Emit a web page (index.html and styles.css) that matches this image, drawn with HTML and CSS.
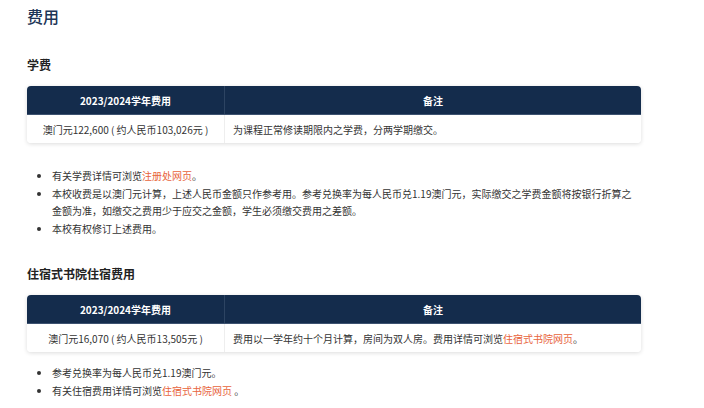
FILE: index.html
```html
<!DOCTYPE html>
<html lang="zh-CN">
<head>
    <meta charset="UTF-8">
    <meta name="viewport" content="width=device-width, initial-scale=1.0">
    <title>费用</title>
    <link rel="stylesheet" href="styles.css">
</head>
<body>
    <div class="page">
        <h1 class="page-title">费用</h1>

        <h3 class="section-title">学费</h3>
        <div class="fee-table">
            <div class="fee-head">
                <div class="cell cell-amount">2023/2024学年费用</div>
                <div class="cell cell-note">备注</div>
            </div>
            <div class="fee-row">
                <div class="cell cell-amount">澳门元122,600 ( 约人民币103,026元 )</div>
                <div class="cell cell-note">为课程正常修读期限内之学费，分两学期缴交。</div>
            </div>
        </div>
        <ul class="notes notes-first">
            <li>有关学费详情可浏览<a href="#">注册处网页</a>。</li>
            <li>本校收费是以澳门元计算，上述人民币金额只作参考用。参考兑换率为每人民币兑1.19澳门元，实际缴交之学费金额将按银行折算之金额为准，如缴交之费用少于应交之金额，学生必须缴交费用之差额。</li>
            <li>本校有权修订上述费用。</li>
        </ul>

        <h3 class="section-title">住宿式书院住宿费用</h3>
        <div class="fee-table">
            <div class="fee-head">
                <div class="cell cell-amount">2023/2024学年费用</div>
                <div class="cell cell-note">备注</div>
            </div>
            <div class="fee-row">
                <div class="cell cell-amount">澳门元16,070 ( 约人民币13,505元 )</div>
                <div class="cell cell-note">费用以一学年约十个月计算，房间为双人房。费用详情可浏览<a href="#">住宿式书院网页</a> 。</div>
            </div>
        </div>
        <ul class="notes">
            <li>参考兑换率为每人民币兑1.19澳门元。</li>
            <li>有关住宿费用详情可浏览<a href="#">住宿式书院网页</a> 。</li>
        </ul>
    </div>
</body>
</html>
```

FILE: styles.css
```css
body {
    margin: 0;
    font-family: "Noto Sans CJK SC", "Noto Sans", sans-serif;
    color: #333;
    background: #fff;
}
.page {
    width: 614px;
    padding: 4px 27px;
}
.page-title {
    margin: 0;
    font-size: 16px;
    line-height: 24px;
    font-weight: 500;
    color: #1d3557;
}
.section-title {
    margin: 28px 0 12px;
    font-size: 12px;
    line-height: 18px;
    font-weight: 700;
    color: #222;
}
.fee-table {
    border-radius: 4px;
    overflow: hidden;
    box-shadow: 0 1px 4px rgba(0,0,0,0.14);
    font-size: 10px;
}
.fee-head, .fee-row {
    display: grid;
    grid-template-columns: 198px 1fr;
}
.fee-head {
    background-color: #142c4c;
    color: #fff;
    font-weight: 700;
    height: 28px;
    border-bottom: 1px solid #3d5270;
}
.fee-head .cell {
    display: flex;
    align-items: center;
    justify-content: center;
}
.fee-head .cell-amount {
    border-right: 1px solid #2d4462;
}
.fee-row {
    height: 28px;
    background: #fff;
}
.fee-row .cell {
    display: flex;
    align-items: center;
}
.fee-row .cell-amount {
    justify-content: center;
    border-right: 1px solid #eee;
}
.fee-row .cell-note {
    padding-left: 8px;
}
.notes {
    margin: 12px 0 0;
    padding-left: 25px;
    font-size: 10px;
    line-height: 17px;
}
.notes-first {
    margin-top: 24px;
}
.notes li {
    margin-bottom: 1px;
}
.notes a {
    color: #e8643c;
    text-decoration: none;
}
.fee-row a {
    color: #e8643c;
    text-decoration: none;
}
```
